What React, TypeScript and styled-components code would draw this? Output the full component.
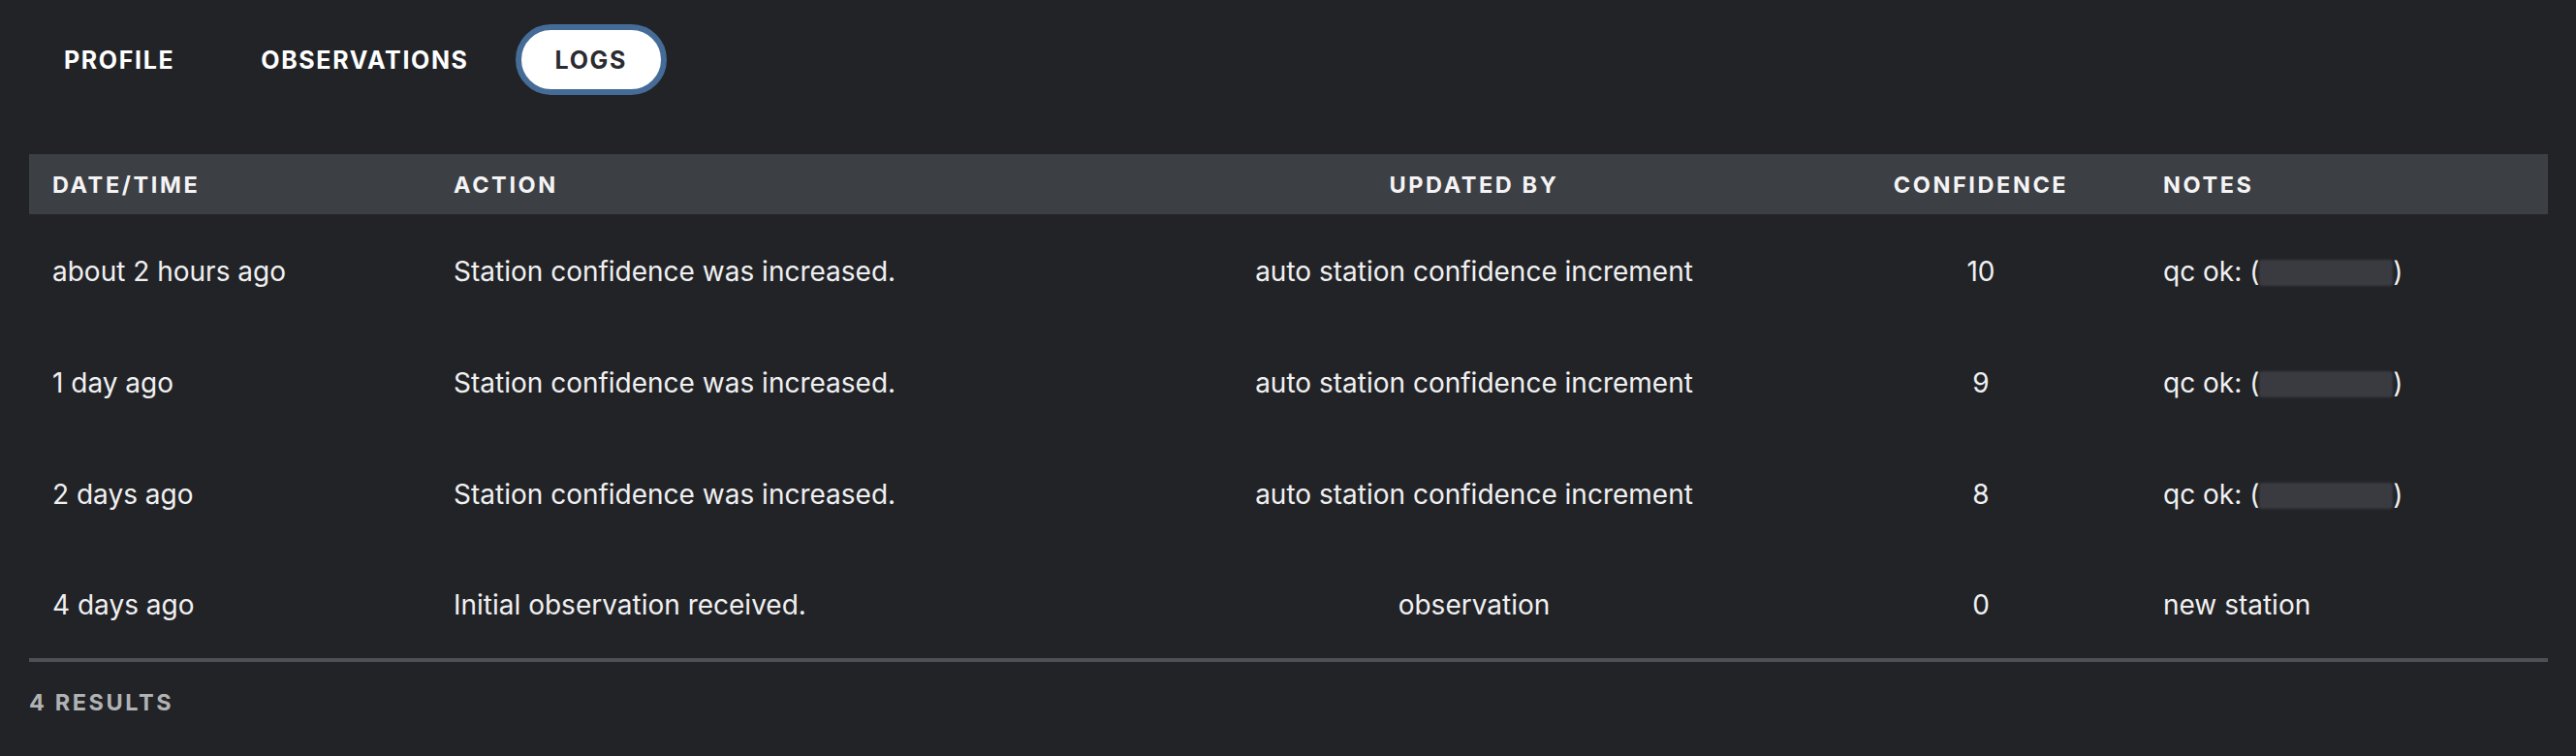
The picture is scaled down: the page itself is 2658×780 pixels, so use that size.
import React from 'react';
import styled, { createGlobalStyle } from 'styled-components';

type Align = 'left' | 'center';
type Column = { title: string; width?: number; align: Align };
type LogEntry = {
  when: string;
  action: string;
  updatedBy: string;
  confidence: number;
  notes: string;
  redacted?: boolean;
};

const columns: Column[] = [
  { title: 'Date/Time', width: 414, align: 'left' },
  { title: 'Action', width: 718, align: 'left' },
  { title: 'Updated By', width: 718, align: 'center' },
  { title: 'Confidence', width: 328, align: 'center' },
  { title: 'Notes', align: 'left' },
];

const logs: LogEntry[] = [
  {
    when: 'about 2 hours ago',
    action: 'Station confidence was increased.',
    updatedBy: 'auto station confidence increment',
    confidence: 10,
    notes: 'qc ok:',
    redacted: true,
  },
  {
    when: '1 day ago',
    action: 'Station confidence was increased.',
    updatedBy: 'auto station confidence increment',
    confidence: 9,
    notes: 'qc ok:',
    redacted: true,
  },
  {
    when: '2 days ago',
    action: 'Station confidence was increased.',
    updatedBy: 'auto station confidence increment',
    confidence: 8,
    notes: 'qc ok:',
    redacted: true,
  },
  {
    when: '4 days ago',
    action: 'Initial observation received.',
    updatedBy: 'observation',
    confidence: 0,
    notes: 'new station',
  },
];

const tabs = ['Profile', 'Observations', 'Logs'];

export default function App() {
  const active = 'Logs';
  return (
    <>
      <GlobalStyle />
      <Page>
        <TabBar>
          {tabs.map((tab) => (
            <Tab key={tab} $active={tab === active}>
              {tab}
            </Tab>
          ))}
        </TabBar>

        <Table>
          <colgroup>
            {columns.map((col) => (
              <col key={col.title} style={col.width ? { width: col.width } : undefined} />
            ))}
          </colgroup>
          <thead>
            <HeadRow>
              {columns.map((col) => (
                <HeadCell key={col.title} $align={col.align}>
                  {col.title}
                </HeadCell>
              ))}
            </HeadRow>
          </thead>
          <tbody>
            {logs.map((log, i) => (
              <Row key={i}>
                <Cell $align="left">{log.when}</Cell>
                <Cell $align="left">{log.action}</Cell>
                <Cell $align="center">{log.updatedBy}</Cell>
                <Cell $align="center">{log.confidence}</Cell>
                <Cell $align="left">
                  {log.redacted ? (
                    <>
                      {log.notes} (<Redacted />)
                    </>
                  ) : (
                    log.notes
                  )}
                </Cell>
              </Row>
            ))}
          </tbody>
        </Table>

        <ResultCount>{logs.length} results</ResultCount>
      </Page>
    </>
  );
}

const GlobalStyle = createGlobalStyle`
  html, body {
    margin: 0;
    padding: 0;
    background: #222327;
  }
  body {
    font-family: Inter, "Noto Sans", "Liberation Sans", sans-serif;
    color: #f2f2f3;
    -webkit-font-smoothing: antialiased;
  }
`;

const Page = styled.div`
  min-height: 780px;
  box-sizing: border-box;
  padding: 25px 29px 0 30px;
  background: #222327;
`;

const TabBar = styled.div`
  display: flex;
  align-items: center;
  gap: 7px;
  margin-left: -5px;
  margin-bottom: 61px;
`;

const Tab = styled.button<{ $active?: boolean }>`
  height: 73px;
  box-sizing: border-box;
  padding: 0 35px;
  border: 6px solid ${(p) => (p.$active ? '#456b97' : 'transparent')};
  border-radius: 37px;
  background: ${(p) => (p.$active ? '#ffffff' : 'transparent')};
  color: ${(p) => (p.$active ? '#2a2b30' : '#ffffff')};
  font-family: Inter, "Noto Sans", sans-serif;
  font-size: 25px;
  font-weight: 700;
  letter-spacing: 0.065em;
  text-transform: uppercase;
  cursor: pointer;
`;

const Table = styled.table`
  width: 100%;
  table-layout: fixed;
  border-collapse: collapse;
  border-bottom: 4px solid #4d5156;
`;

const HeadRow = styled.tr`
  background: #3c3f44;
  height: 62px;
`;

const HeadCell = styled.th<{ $align: Align }>`
  padding: 0 24px;
  text-align: ${(p) => p.$align};
  font-size: 23.5px;
  font-weight: 700;
  letter-spacing: 0.11em;
  text-transform: uppercase;
  color: #f4f4f5;
  white-space: nowrap;
`;

const Row = styled.tr`
  height: 115px;
`;

const Cell = styled.td<{ $align: Align }>`
  padding: 2px 24px 0;
  text-align: ${(p) => p.$align};
  font-size: 28px;
  font-weight: 400;
  color: #f0f0f1;
  white-space: nowrap;
`;

const Redacted = styled.span`
  display: inline-block;
  width: 138px;
  height: 27px;
  vertical-align: -5px;
  background: #393b40;
  border-radius: 3px;
  filter: blur(1px);
`;

const ResultCount = styled.div`
  margin-top: 27px;
  font-size: 23.5px;
  font-weight: 700;
  letter-spacing: 0.11em;
  text-transform: uppercase;
  color: #b1b2b4;
`;
